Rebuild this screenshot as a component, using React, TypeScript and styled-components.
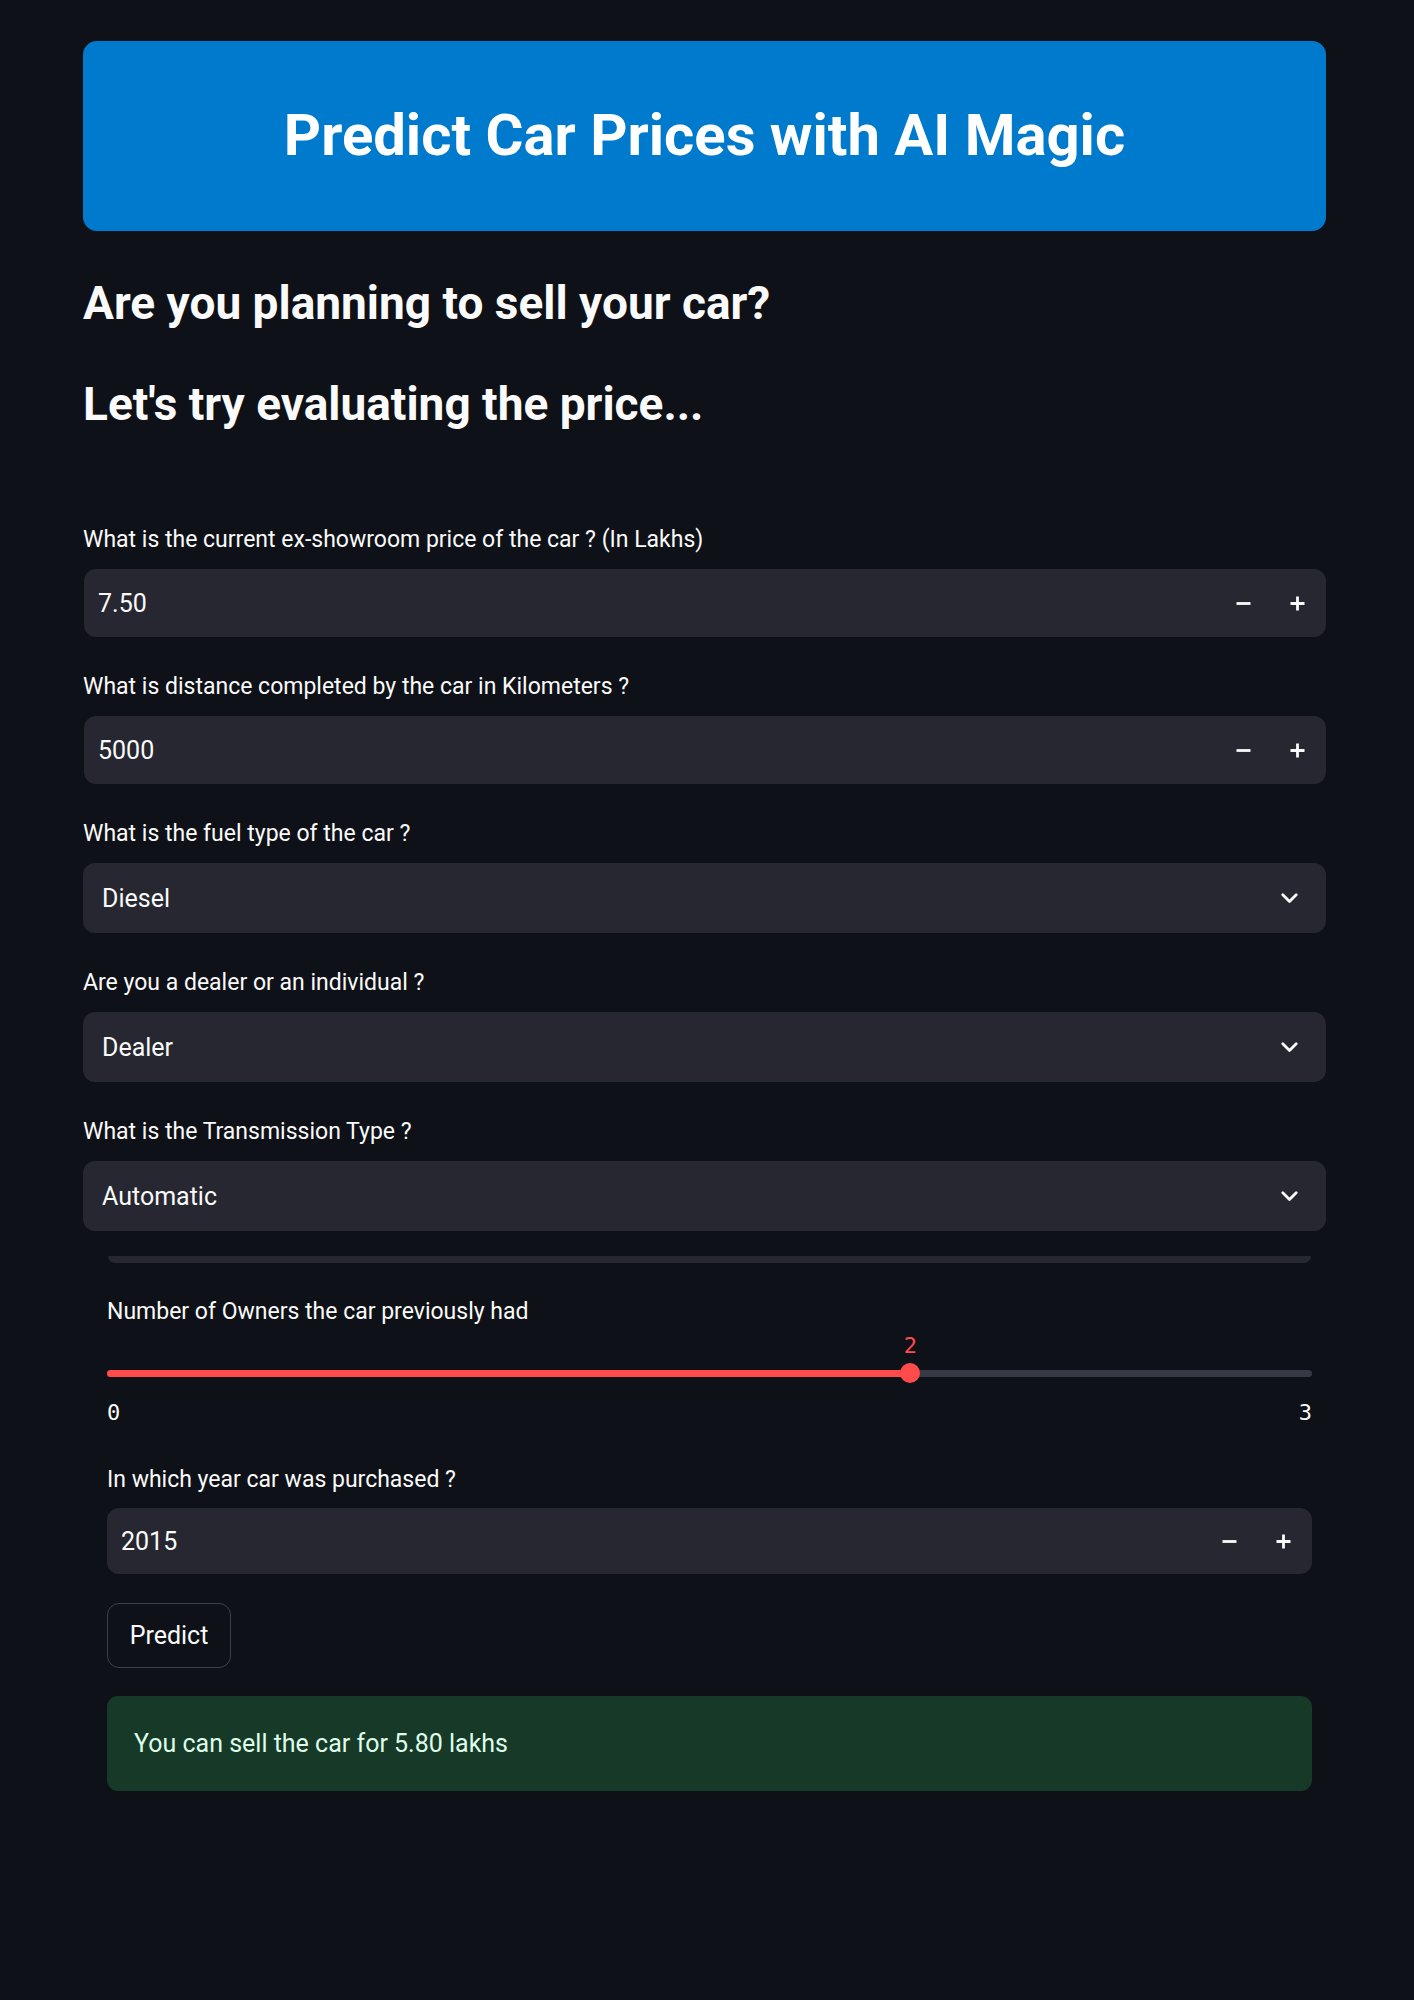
import React from "react";
import styled, { createGlobalStyle } from "styled-components";

const GlobalStyle = createGlobalStyle`
  html, body {
    margin: 0;
    padding: 0;
    background: #0e1117;
  }
  body {
    font-family: Roboto, "Liberation Sans", Arial, sans-serif;
    color: #fafafa;
    -webkit-font-smoothing: antialiased;
  }
  *, *::before, *::after { box-sizing: border-box; }
`;

const Page = styled.main`
  width: 1243px;
  margin-left: 83px;
  padding: 41px 0 200px;
  display: flex;
  flex-direction: column;
`;

const Banner = styled.header`
  height: 190px;
  background: #007acc;
  border-radius: 14px;
  display: flex;
  align-items: center;
  justify-content: center;
`;

const Title = styled.h1`
  margin: 0;
  font-size: 58px;
  line-height: 1.2;
  font-weight: 700;
  color: #ffffff;
`;

const Subheading = styled.h3<{ $gap: number }>`
  margin: ${(p) => p.$gap}px 0 0;
  font-size: 46px;
  line-height: 55px;
  font-weight: 700;
  color: #fafafa;
`;

const Form = styled.section`
  margin-top: 88px;
  display: flex;
  flex-direction: column;
  gap: 30px;
`;

const Field = styled.div<{ $gap?: number }>`
  display: flex;
  flex-direction: column;
  margin-top: ${(p) => p.$gap ?? 0}px;
`;

const Label = styled.label<{ $space?: number }>`
  font-size: 23px;
  line-height: 40px;
  height: 40px;
  margin-bottom: ${(p) => p.$space ?? 9}px;
  color: #fafafa;
  white-space: nowrap;
`;

const InputBox = styled.div<{ $h: number; $inset?: number }>`
  height: ${(p) => p.$h}px;
  margin-left: ${(p) => p.$inset ?? 0}px;
  background: #262730;
  border-radius: 12px;
  display: flex;
  align-items: center;
`;

const Value = styled.span<{ $pad: number }>`
  flex: 1;
  padding-left: ${(p) => p.$pad}px;
  font-size: 25px;
  color: #fafafa;
`;

const Steps = styled.div`
  display: flex;
  height: 100%;
  margin-right: 2px;
`;

const StepButton = styled.button`
  width: 54px;
  height: 100%;
  border: none;
  background: transparent;
  padding: 0;
  display: flex;
  align-items: center;
  justify-content: center;
  color: #fafafa;
  cursor: pointer;
`;

const Chevron = styled.span`
  display: flex;
  margin-right: 28px;
`;

const Inset = styled.div`
  display: flex;
  flex-direction: column;
  padding: 0 14px 0 24px;
  margin-top: 25px;
`;

const PeekBar = styled.div`
  height: 7px;
  margin: 0 1px;
  background: #262730;
  border-radius: 0 0 8px 8px;
`;

const SliderBlock = styled.div`
  display: flex;
  flex-direction: column;
  margin-top: 29px;
`;

const TrackArea = styled.div`
  position: relative;
  height: 20px;
  margin-top: 31px;
  display: flex;
  align-items: center;
`;

const Track = styled.div`
  position: relative;
  width: 100%;
  height: 7px;
  border-radius: 4px;
  background: #373a44;
`;

const Fill = styled.div`
  position: absolute;
  left: 0;
  top: 0;
  bottom: 0;
  border-radius: 4px;
  background: #ff4b4b;
`;

const Thumb = styled.div`
  position: absolute;
  top: 0;
  width: 20px;
  height: 20px;
  margin-left: -10px;
  border-radius: 50%;
  background: #ff4b4b;
`;

const ThumbValue = styled.div`
  position: absolute;
  top: -29px;
  width: 40px;
  margin-left: -20px;
  text-align: center;
  font-family: "DejaVu Sans Mono", "Liberation Mono", monospace;
  font-size: 22px;
  line-height: 24px;
  color: #ff4b4b;
`;

const Ticks = styled.div`
  display: flex;
  justify-content: space-between;
  margin-top: 18px;
  font-family: "DejaVu Sans Mono", "Liberation Mono", monospace;
  font-size: 22px;
  line-height: 24px;
  color: #fafafa;
`;

const PredictButton = styled.button`
  align-self: flex-start;
  width: 124px;
  height: 65px;
  margin-top: 29px;
  border: 1px solid rgba(250, 250, 250, 0.2);
  border-radius: 12px;
  background: transparent;
  color: #fafafa;
  font-family: Roboto, "Liberation Sans", Arial, sans-serif;
  font-size: 25px;
  cursor: pointer;
`;

const Success = styled.div`
  margin-top: 28px;
  height: 95px;
  border-radius: 11px;
  background: #173928;
  color: #dffde9;
  font-size: 25px;
  display: flex;
  align-items: center;
  padding: 0 27px;
`;

const Minus = () => (
  <svg width="15" height="15" viewBox="0 0 15 15">
    <path d="M0.5 7.5H14.5" stroke="currentColor" strokeWidth="2.8" />
  </svg>
);

const Plus = () => (
  <svg width="15" height="15" viewBox="0 0 15 15">
    <path d="M0.5 7.5H14.5M7.5 0.5V14.5" stroke="currentColor" strokeWidth="2.8" />
  </svg>
);

const ChevronDown = () => (
  <svg width="17" height="11" viewBox="0 0 17 11" fill="none">
    <path
      d="M1.8 1.8L8.5 8.5L15.2 1.8"
      stroke="#fafafa"
      strokeWidth="2.8"
      strokeLinecap="round"
      strokeLinejoin="round"
    />
  </svg>
);

type NumberFieldProps = {
  label: string;
  value: string;
  height: number;
  pad: number;
  gap?: number;
  space?: number;
  inset?: number;
};

const NumberField = ({ label, value, height, pad, gap, space, inset }: NumberFieldProps) => (
  <Field $gap={gap}>
    <Label $space={space}>{label}</Label>
    <InputBox $h={height} $inset={inset}>
      <Value $pad={pad}>{value}</Value>
      <Steps>
        <StepButton aria-label="decrement">
          <Minus />
        </StepButton>
        <StepButton aria-label="increment">
          <Plus />
        </StepButton>
      </Steps>
    </InputBox>
  </Field>
);

const SelectField = ({ label, value }: { label: string; value: string }) => (
  <Field>
    <Label>{label}</Label>
    <InputBox $h={70}>
      <Value $pad={19}>{value}</Value>
      <Chevron>
        <ChevronDown />
      </Chevron>
    </InputBox>
  </Field>
);

const OwnersSlider = ({ value, min, max }: { value: number; min: number; max: number }) => {
  const pct = ((value - min) / (max - min)) * 100;
  return (
    <SliderBlock>
      <Label $space={0}>Number of Owners the car previously had</Label>
      <TrackArea>
        <Track>
          <Fill style={{ width: `${pct}%` }} />
        </Track>
        <Thumb style={{ left: `${pct}%` }} />
        <ThumbValue style={{ left: `${pct}%` }}>{value}</ThumbValue>
      </TrackArea>
      <Ticks>
        <span>{min}</span>
        <span>{max}</span>
      </Ticks>
    </SliderBlock>
  );
};

export default function App() {
  return (
    <>
      <GlobalStyle />
      <Page>
        <Banner>
          <Title>Predict Car Prices with AI Magic</Title>
        </Banner>
        <Subheading $gap={45}>Are you planning to sell your car?</Subheading>
        <Subheading $gap={46}>Let's try evaluating the price...</Subheading>
        <Form>
          <NumberField
            label="What is the current ex-showroom price of the car ? (In Lakhs)"
            value="7.50"
            height={68}
            pad={14}
            inset={1}
          />
          <NumberField
            label="What is distance completed by the car in Kilometers ?"
            value="5000"
            height={68}
            pad={14}
            inset={1}
          />
          <SelectField label="What is the fuel type of the car ?" value="Diesel" />
          <SelectField label="Are you a dealer or an individual ?" value="Dealer" />
          <SelectField label="What is the Transmission Type ?" value="Automatic" />
        </Form>
        <Inset>
          <PeekBar />
          <OwnersSlider value={2} min={0} max={3} />
          <NumberField
            label="In which year car was purchased ?"
            value="2015"
            height={66}
            pad={14}
            gap={35}
            space={8}
          />
          <PredictButton>Predict</PredictButton>
          <Success>You can sell the car for 5.80 lakhs</Success>
        </Inset>
      </Page>
    </>
  );
}
